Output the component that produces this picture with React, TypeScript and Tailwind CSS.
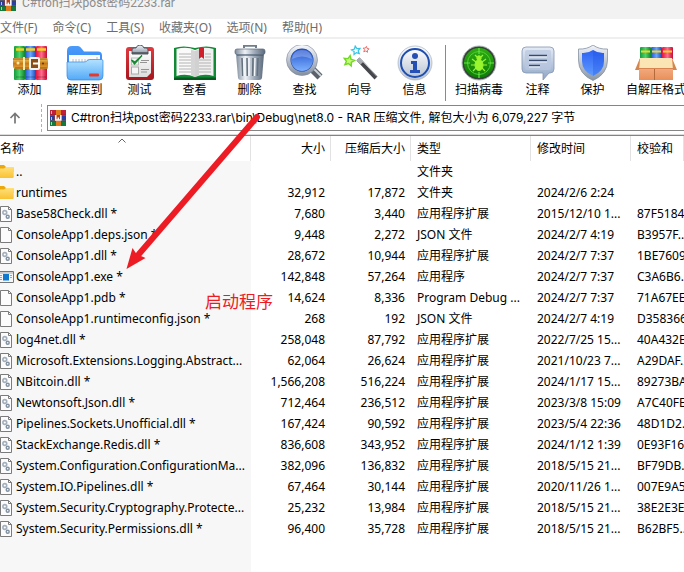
import React from "react";

type Kind = "folder" | "dll" | "file" | "exe";
type Row = [Kind, string, string, string, string, string, string];

const rows: Row[] = [
  ["folder", "..", "", "", "文件夹", "", ""],
  ["folder", "runtimes", "32,912", "17,872", "文件夹", "2024/2/6 2:24", ""],
  ["dll", "Base58Check.dll *", "7,680", "3,440", "应用程序扩展", "2015/12/10 1...", "87F5184..."],
  ["file", "ConsoleApp1.deps.json *", "9,448", "2,272", "JSON 文件", "2024/2/7 4:19", "B3957F..."],
  ["dll", "ConsoleApp1.dll *", "28,672", "10,944", "应用程序扩展", "2024/2/7 7:37", "1BE7609..."],
  ["exe", "ConsoleApp1.exe *", "142,848", "57,264", "应用程序", "2024/2/7 7:37", "C3A6B6..."],
  ["file", "ConsoleApp1.pdb *", "14,624", "8,336", "Program Debug ...", "2024/2/7 7:37", "71A67EE..."],
  ["file", "ConsoleApp1.runtimeconfig.json *", "268", "192", "JSON 文件", "2024/2/7 4:19", "D358366..."],
  ["dll", "log4net.dll *", "258,048", "87,792", "应用程序扩展", "2022/7/25 15...", "40A432E..."],
  ["dll", "Microsoft.Extensions.Logging.Abstract...", "62,064", "26,624", "应用程序扩展", "2021/10/23 7...", "A29DAF..."],
  ["dll", "NBitcoin.dll *", "1,566,208", "516,224", "应用程序扩展", "2024/1/17 15...", "89273BA..."],
  ["dll", "Newtonsoft.Json.dll *", "712,464", "236,512", "应用程序扩展", "2023/3/8 15:09", "A7C40FE..."],
  ["dll", "Pipelines.Sockets.Unofficial.dll *", "167,424", "90,592", "应用程序扩展", "2023/5/4 22:36", "48D1D2..."],
  ["dll", "StackExchange.Redis.dll *", "836,608", "343,952", "应用程序扩展", "2024/1/12 1:39", "0E93F16..."],
  ["dll", "System.Configuration.ConfigurationMa...", "382,096", "136,832", "应用程序扩展", "2018/5/15 21...", "BF79DB..."],
  ["dll", "System.IO.Pipelines.dll *", "67,464", "30,144", "应用程序扩展", "2020/11/26 1...", "007E9A5..."],
  ["dll", "System.Security.Cryptography.Protecte...", "25,232", "13,984", "应用程序扩展", "2018/5/15 21...", "38E2E3E..."],
  ["dll", "System.Security.Permissions.dll *", "96,400", "35,728", "应用程序扩展", "2018/5/15 21...", "B62BF5..."],
];

const menus = ["文件(F)", "命令(C)", "工具(S)", "收藏夹(O)", "选项(N)", "帮助(H)"];

function Gradients() {
  const list: [string, string[], boolean][] = [
    ["gGreen", ["#169a3c", "#4bd56a", "#12812f"], true],
    ["gBlue", ["#1f57d0", "#6aa5ff", "#1c49b4"], true],
    ["gRed", ["#e2143f", "#ff6d8d", "#c60c34"], true],
    ["gGold", ["#f8cf66", "#c87b18", "#e9a23a"], false],
    ["gFolderBack", ["#4b9bfa", "#2a7cf0"], false],
    ["gFolder", ["#b4e2ff", "#52a9f8"], false],
    ["gPaper", ["#ffffff", "#dcdcdc"], false],
    ["gBoard", ["#e03a40", "#a5161c"], false],
    ["gMetal", ["#7d8b9c", "#eef2f6", "#9aa7b6", "#5c6a7c"], true],
    ["gRim", ["#f1f4f8", "#8995a6"], false],
    ["gLens", ["#2452cc", "#7db1ff"], false],
    ["gInfo", ["#fdfdfe", "#b9c4d2"], false],
    ["gScan", ["#2fae12", "#0d7a06"], false],
    ["gNote", ["#e4ebf5", "#8ea5c6"], false],
    ["gShield", ["#2e62f2", "#5e9cff"], false],
    ["gBox", ["#f9c19a", "#e88f5a"], false],
    ["gYellow", ["#ffe07a", "#f9c232"], false],
  ];
  return (
    <svg className="absolute size-0" aria-hidden="true">
      <defs>
        {list.map(([id, stops, across]) => (
          <linearGradient key={id} id={id} x1="0" y1="0" x2={across ? "1" : "0"} y2={across ? "0" : "1"}>
            {stops.map((c, i) => (
              <stop key={i} offset={i / (stops.length - 1)} stopColor={c} />
            ))}
          </linearGradient>
        ))}
      </defs>
    </svg>
  );
}

function Icon({ children }: { children: React.ReactNode }) {
  return (
    <svg viewBox="0 0 44 36" className="h-9 w-11" aria-hidden="true">
      {children}
    </svg>
  );
}

function starPoints(cx: number, cy: number, r: number, turn: number) {
  return Array.from({ length: 10 }, (_, i) => {
    const a = ((i * 36 + turn - 90) * Math.PI) / 180;
    const d = i % 2 ? r * 0.48 : r;
    return `${cx + d * Math.cos(a)},${cy + d * Math.sin(a)}`;
  }).join(" ");
}

const AddIcon = () => (
  <Icon>
    <rect x="6" y="1" width="11" height="34" rx="1" fill="url(#gGreen)" />
    <rect x="17" y="1" width="11" height="34" rx="1" fill="url(#gBlue)" />
    <rect x="28" y="1" width="11" height="34" rx="1" fill="url(#gRed)" />
    <path d="M8 4.500h8M18 4.500h9M29 4.500h9" stroke="#f5d21c" strokeWidth="2.500" />
    <path d="M8 32h8M18 32h9M29 32h9" stroke="#0004" strokeWidth="1" />
    <path d="M5 13h34a1 1 0 0 1 1 1v9a1 1 0 0 1-1 1H8q-3 0-3-3z" fill="url(#gGold)" />
    <path d="M5 14h34M7 23h32" stroke="#8e5410" strokeWidth="1" />
    <path d="M16 12v13" stroke="#fbe7a5" strokeWidth="2" />
    <rect x="22" y="13" width="9" height="11" rx="1" fill="#8d4b16" stroke="#f3f3ee" strokeWidth="2" />
    <path d="M25 18.500h7" stroke="#fff" strokeWidth="2" />
    <circle cx="35" cy="18.500" r="1" fill="#60320a" />
    <circle cx="10" cy="18" r="1.500" fill="#fbe7a5" />
  </Icon>
);
const ExtractIcon = () => (
  <Icon>
    <path d="M4 6q0-5 5-5h6q2 0 4 3l2 2.500h14q4 0 4 4V30H4z" fill="url(#gFolderBack)" />
    <rect x="6" y="10" width="31" height="14" fill="#fbfbfb" />
    <path d="M10 14v3M13 14v3M16 14v3M19 14v3M22 14v3M25 14v3M28 14v3M31 14v3M34 12v5" stroke="#b8bec8" strokeWidth="1" />
    <path d="M4 17h17q2 0 3.500-1.500T28 14.500h11q1 0 1 2V31q0 4-4 4H8q-4 0-4-4z" fill="url(#gFolder)" stroke="#2f86e6" strokeWidth=".7" />
    <rect x="26" y="28.500" width="10" height="3" rx="1" fill="#e8382b" />
  </Icon>
);
const TestIcon = () => (
  <Icon>
    <rect x="8" y="2" width="28" height="33" rx="3" fill="url(#gBoard)" />
    <path d="M11 6h22v22l-4 4H11z" fill="url(#gPaper)" />
    <path d="M14 9V5q0-2 2-2h2q1-3 4-3t4 3h2q2 0 2 2v4z" fill="url(#gRim)" stroke="#555c66" />
    <path d="M14 8h16" stroke="#4b4f56" strokeWidth="1.500" />
    <rect x="13.500" y="13" width="7" height="7" fill="#f5f5f5" stroke="#b9b9b9" />
    <path d="m13.500 15 3 4L24 10.500 17 17z" fill="#178b34" stroke="#178b34" strokeWidth="1.300" />
    <rect x="13.500" y="22" width="7" height="7" fill="#f5f5f5" stroke="#a9a9a9" />
    <path d="M23 15.500h8M22 17.500h7M23 24.500h8M23 27h6" stroke="#949494" strokeWidth="1" />
  </Icon>
);
const ViewIcon = () => (
  <Icon>
    <path d="M1 3q9-3 21 0 12-3 21 0v31H1z" fill="#128a35" />
    <path d="M1 32.500h42V35H1z" fill="#08591f" />
    <path d="M3.500 4Q14 1 22 5v27Q13 28 3.500 31z" fill="#fafafa" />
    <path d="M40.500 4Q30 1 22 5v27q9-4 18.500-1z" fill="#f0f0f0" />
    <path d="M18 4.500 22 6v26l-4-2zM26 4.500 22 6v26l4-2z" fill="#bdbdbd" opacity=".6" />
    <path d="M6 9h12M6 12h12M6 15h12M6 18h12M6 21h12M6 24h12M6 27h12M32 9h6M32 12h6M26 15h12M26 18h12M26 21h12M26 24h12M26 27h12" stroke="#b2b2b2" strokeWidth="1" />
    <path d="M26 3h5v11l-2.500-2-2.500 2z" fill="#cf1f2c" />
  </Icon>
);
const DeleteIcon = () => (
  <Icon>
    <path d="M16 3V.800h12V3" fill="none" stroke="#707d8c" strokeWidth="2" />
    <path d="M8 9h28l-2 24q-.3 2-3 2H13q-2.700 0-3-2z" fill="url(#gMetal)" />
    <rect x="7" y="4" width="30" height="5.500" rx="2" fill="url(#gMetal)" stroke="#59687a" strokeWidth=".7" />
    <path d="M14 13l.7 18M19 13l.3 18M25 13l-.3 18M30 13l-.7 18" stroke="#65737f" strokeWidth="1.600" />
    <path d="M15.800 13l.5 18M21 13v18M27 13l-.5 18" stroke="#f5f8fb" strokeWidth="1.400" />
    <path d="M9 10.500h26" stroke="#49586a" strokeWidth="1" opacity=".6" />
  </Icon>
);
const FindIcon = () => (
  <Icon>
    <path d="m29 24 8 8" stroke="#5b616a" strokeWidth="7" />
    <path d="m30 23 8 8" stroke="#cbd1d8" strokeWidth="2" />
    <circle cx="19" cy="15" r="13.500" fill="#23479c" stroke="url(#gRim)" strokeWidth="4" />
    <circle cx="19" cy="15" r="15.500" fill="none" stroke="#7c8798" strokeWidth=".6" />
    <circle cx="19" cy="15" r="11" fill="url(#gLens)" />
    <path d="M9 14q1-9 10-9t10 9q-10-5-20 0" fill="#fff" opacity=".25" />
  </Icon>
);
const WizardIcon = () => (
  <Icon>
    <path d="m20 14 18 19" stroke="#45474c" strokeWidth="4" />
    <path d="m20 14 4 4.200" stroke="#a9adb2" strokeWidth="4" />
    <path d="m22 13.500 17 18" stroke="#b6babe" strokeWidth="1" />
    <polygon points={starPoints(11, 16, 5.5, 12)} fill="#c4f97a" stroke="#6edb1e" strokeWidth="1.400" />
    <polygon points={starPoints(18, 5.5, 4.5, -10)} fill="#f2ffff" stroke="#35c3e4" strokeWidth="1.200" />
    <polygon points={starPoints(28, 4.5, 3.2, 8)} fill="#fff3f2" stroke="#f0706c" strokeWidth="1" />
  </Icon>
);
const InfoIcon = () => (
  <Icon>
    <circle cx="22" cy="18" r="17" fill="url(#gInfo)" stroke="#a5b0bf" strokeWidth=".7" />
    <circle cx="22" cy="18" r="14" fill="url(#gInfo)" stroke="#1d4eb0" strokeWidth="2" />
    <circle cx="22" cy="11" r="3" fill="#2450b5" />
    <path d="M18 16h6v9h3v3H17v-3h3v-6h-2z" fill="#2450b5" />
  </Icon>
);
const ScanIcon = () => (
  <Icon>
    <circle cx="22" cy="18" r="16" fill="url(#gScan)" stroke="#37403a" strokeWidth="2" />
    <circle cx="22" cy="18" r="17" fill="none" stroke="#b7bec0" strokeWidth="1" />
    <circle cx="22" cy="18" r="11.500" fill="none" stroke="#52cf37" strokeWidth="1" />
    <path d="M22 3v6M22 27v6M7 18h6M31 18h6" stroke="#65e348" strokeWidth="1.200" />
    <g fill="#99f52e" stroke="#99f52e">
      <ellipse cx="22" cy="20" rx="4" ry="5.500" />
      <circle cx="22" cy="13" r="2.200" />
      <path d="m18 10 2 2M26 10l-2 2M19 17l-4-3M25 17l4-3M18 20h-4M26 20h4M19 23l-3 3M25 23l3 3" fill="none" strokeWidth="1.200" />
    </g>
  </Icon>
);
const NoteIcon = () => (
  <Icon>
    <path d="M10 2h24q4 0 4 4v18q0 4-4 4h-1l-6 7v-7H10q-4 0-4-4V6q0-4 4-4z" fill="url(#gNote)" stroke="#8496b1" strokeWidth=".8" />
    <rect x="9" y="5" width="26" height="20" rx="2" fill="#b9c8df" opacity=".7" />
    <path d="M13 10.500h18M13 15.500h18M13 20.500h11" stroke="#384b6c" strokeWidth="1.400" />
    <path d="M13 12h18M13 17h18M13 22h11" stroke="#edf2f9" strokeWidth="1" />
  </Icon>
);
const ShieldIcon = () => (
  <Icon>
    <path d="M22 0q6 4.500 14.500 4v11q0 14-14.500 20.500Q7.500 29 7.500 15V4Q16 4.500 22 0z" fill="url(#gRim)" stroke="#8592a3" strokeWidth=".8" />
    <path d="M22 5q5 3.500 11 3v8q0 10-11 15-11-5-11-15V8q6 .5 11-3z" fill="url(#gShield)" />
    <path d="M22 5q5 3.500 11 3v8q0 10-11 15z" fill="#1b4de0" opacity=".3" />
  </Icon>
);
const SfxIcon = () => (
  <Icon>
    <rect x="6" y="2" width="11" height="14" rx="1" fill="url(#gGreen)" />
    <rect x="17" y="2" width="11" height="14" rx="1" fill="url(#gBlue)" />
    <rect x="28" y="2" width="11" height="14" rx="1" fill="url(#gRed)" />
    <path d="M7 6.500h9M18 6.500h9M29 6.500h9" stroke="#f5d21c" strokeWidth="1.800" />
    <path d="M5 14h34v21H5z" fill="url(#gBox)" />
    <path d="M6 13h32l2 10H5z" fill="#fce5b5" />
    <path d="M6 13 1 25h4zM38 13l5 12h-4z" fill="#d48650" />
    <path d="M5 23.500h35" stroke="#d98450" strokeWidth="1" />
    <path d="M20.500 24v11" stroke="#b56a3c" strokeWidth="1" />
  </Icon>
);

function RarIcon() {
  return (
    <svg viewBox="0 0 16 16" className="size-4 shrink-0" aria-hidden="true">
      <rect width="16" height="5" y="0" fill="#c11f3c" />
      <rect width="16" height="5" y="5.500" fill="#2b3fa0" />
      <rect width="16" height="5" y="11" fill="#157a3b" />
      <path d="M0 5.300h16M0 10.700h16" stroke="#222" strokeWidth=".7" />
      <path d="M1.500 1v3M1.500 7v3M1.500 12v3" stroke="#e6cf2e" strokeWidth="1" />
      <rect x="6" width="5" height="16" fill="#e07c1e" />
      <rect x="4.500" y="5" width="7.500" height="6" rx="1" fill="#b6401e" />
      <path d="M5.800 5v5h5V5M8.300 7.500V10" fill="none" stroke="#fff" strokeWidth="1.500" />
    </svg>
  );
}

function FileIcon({ kind }: { kind: Kind }) {
  return (
    <svg viewBox="0 0 14 18" className="h-[18px] w-[14px] shrink-0" aria-hidden="true">
      {kind === "folder" && (
        <>
          <path d="M-2 2h6l2 2h6.500q1 0 1 1v4H-2z" fill="#eca90c" />
          <path d="M-2 5.500h6L6 4h6.500q1.200 0 1.200 1.200V14q0 1-1.200 1H-2z" fill="url(#gYellow)" />
        </>
      )}
      {(kind === "dll" || kind === "file") && (
        <>
          <path d="M.5 1.500h8l3 3v12H.5z" fill="#fcfcfc" stroke="#7b7b7b" />
          <path d="M8.500 1.500v3h3" fill="none" stroke="#7b7b7b" />
        </>
      )}
      {kind === "dll" && (
        <g fill="none">
          <circle cx="4.800" cy="7.500" r="1.900" stroke="#a3afbc" strokeWidth="1.600" />
          <circle cx="7.700" cy="11.800" r="1.500" stroke="#8291a1" strokeWidth="1.400" />
        </g>
      )}
      {kind === "exe" && (
        <>
          <path d="M-2 3.500h15.500v11H-2z" fill="#f6f6f6" stroke="#767676" />
          <path d="M-2 5h15" stroke="#a5a5a5" strokeWidth="1" />
          <rect x="3" y="6" width="6" height="6.500" fill="#0f78cf" />
          <path d="M0 7.500h2M0 9.500h2M0 11.500h2M10 7.500h2M10 9.500h2" stroke="#a2a2a2" strokeWidth="1" />
        </>
      )}
    </svg>
  );
}

const tools: [string, () => React.ReactElement, string][] = [
  ["添加", AddIcon, "w-[55px]"],
  ["解压到", ExtractIcon, "w-[55px]"],
  ["测试", TestIcon, "w-[55px]"],
  ["查看", ViewIcon, "w-[55px]"],
  ["删除", DeleteIcon, "w-[55px]"],
  ["查找", FindIcon, "w-[55px]"],
  ["向导", WizardIcon, "w-[55px]"],
  ["信息", InfoIcon, "w-[55px]"],
];
const moreTools: [string, () => React.ReactElement, string][] = [
  ["扫描病毒", ScanIcon, "w-[62px]"],
  ["注释", NoteIcon, "w-[55px]"],
  ["保护", ShieldIcon, "w-[55px]"],
  ["自解压格式", SfxIcon, "w-[72px]"],
];

function Tool({ item }: { item: [string, () => React.ReactElement, string] }) {
  const [label, Glyph, width] = item;
  return (
    <button className={`flex shrink-0 flex-col items-center whitespace-nowrap ${width}`}>
      <Glyph />
      <span className="leading-[18px]">{label}</span>
    </button>
  );
}

export default function App() {
  return (
    <div className="relative flex min-h-screen flex-col overflow-hidden bg-white font-['Noto_Sans','Noto_Sans_CJK_SC',sans-serif] text-xs text-black">
      <Gradients />
      <header className="flex h-[19px] items-end bg-[#f2f2f2] pb-2 text-[#8b8b8b]">
        <div className="flex h-4 items-center gap-1.5">
          <RarIcon />
          <span className="font-[Roboto,'Noto_Sans_CJK_SC',sans-serif] leading-4">C#tron扫块post密码2233.rar</span>
        </div>
      </header>

      <nav className="flex h-[18px] items-center gap-[15px] text-[#6d6d6d]">
        {menus.map((m) => (
          <button key={m} className="leading-4 whitespace-nowrap">
            {m}
          </button>
        ))}
      </nav>

      <div className="flex h-[65px] border-t-2 border-[#efefef] pt-1.5 pl-0.5">
        {tools.map((t) => (
          <Tool key={t[0]} item={t} />
        ))}
        <div className="ml-[3px] h-14 w-px shrink-0 bg-[#8a8a8a]" />
        <div className="flex pl-0.5">
          {moreTools.map((t) => (
            <Tool key={t[0]} item={t} />
          ))}
        </div>
      </div>

      <div className="flex h-[33px] items-center border-b border-[#dcdcdc]">
        <button aria-label="Up" className="flex w-[41px] justify-center pr-3">
          <svg viewBox="0 0 12 12" className="size-3" fill="none" stroke="#777" strokeWidth="1.700">
            <path d="M6 11.500V1.500M1.500 6 6 1.500 10.500 6" />
          </svg>
        </button>
        <div className="h-7 border-l border-dashed border-[#b0b0b0]" />
        <label className="ml-[5px] flex h-[26px] grow items-center gap-[5px] border border-r-0 border-[#858585] pl-0.5">
          <RarIcon />
          <input
            aria-label="Path"
            readOnly
            className="min-w-0 grow bg-transparent font-[Inter,'Noto_Sans_CJK_SC',sans-serif] outline-none"
            value="C#tron扫块post密码2233.rar\bin\Debug\net8.0 - RAR 压缩文件, 解包大小为 6,079,227 字节"
          />
        </label>
      </div>

      <main className="flex grow flex-col border-t border-[#85808c]">
        <table className="w-full table-fixed border-separate border-spacing-0 whitespace-nowrap">
          <colgroup>
            <col className="w-[251px]" />
            <col className="w-20" />
            <col className="w-20" />
            <col className="w-[120px]" />
            <col className="w-[100px]" />
            <col />
          </colgroup>
          <thead>
            <tr className="h-[25px] text-left [&>th]:border-r [&>th]:border-[#e2e2e2] [&>th]:font-normal">
              <th className="relative">
                名称
                <svg viewBox="0 0 8 5" className="absolute top-0.5 left-[118px] h-[5px] w-2" fill="none" stroke="#666">
                  <path d="M.5 4.500 4 1l3.500 3.500" />
                </svg>
              </th>
              <th className="pr-[5px] text-right">大小</th>
              <th className="pr-[5px] text-right">压缩后大小</th>
              <th className="pl-1.5">类型</th>
              <th className="pl-1.5">修改时间</th>
              <th className="pl-1.5">校验和</th>
            </tr>
          </thead>
          <tbody>
            {rows.map(([kind, name, size, packed, type, date, crc]) => (
              <tr key={name} className="h-[21px] leading-4">
                <td className="bg-[#f7f7f7]">
                  <div className="flex items-center gap-0.5">
                    <FileIcon kind={kind} />
                    {name}
                  </div>
                </td>
                <td className="pr-1.5 text-right">{size}</td>
                <td className="pr-1.5 text-right">{packed}</td>
                <td className="pl-1.5">{type}</td>
                <td className="pl-1.5">{date}</td>
                <td className="pl-1.5">{crc}</td>
              </tr>
            ))}
          </tbody>
        </table>
        <div className="w-[251px] grow bg-[#f7f7f7]" />
      </main>

      <svg viewBox="0 0 140 160" className="pointer-events-none absolute top-[112px] left-[124px] h-40 w-[140px]" aria-hidden="true">
        <path d="M133 5 15 142" stroke="#ed1c24" strokeWidth="6" strokeLinecap="round" />
        <path d="M2.500 157 8.500 136l4 6 9 4z" fill="#ed1c24" />
      </svg>
      <p className="pointer-events-none absolute top-[290px] left-[205px] text-[17px] leading-6 text-[#ed1c24]">启动程序</p>
    </div>
  );
}
